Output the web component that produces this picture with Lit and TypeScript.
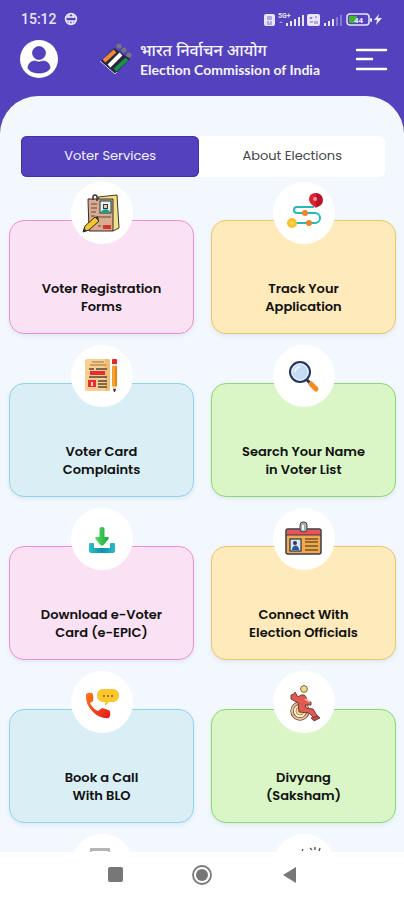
import { LitElement, html, css, svg, TemplateResult } from "lit";
import { customElement, property, state } from "lit/decorators.js";
import { classMap } from "lit/directives/class-map.js";

type Tone = "pink" | "amber" | "blue" | "green";

interface Service {
  lines: string[];
  tone: Tone;
  icon: TemplateResult;
}

const formsIcon = svg`
  <path d="M27 15l19-2 2 33-6 3z" fill="#f3e08a" stroke="#3b3a2c"/>
  <path d="M17 17h25v32H18z" fill="#d9ab90" stroke="#3a2b26"/>
  <path d="M22 18v-3a2 2 0 0 1 4 0v4" fill="none" stroke="#333" stroke-width="1.5"/>
  <rect x="29" y="19" width="11" height="12" fill="#e4f6f3" stroke="#26343a"/>
  <path d="M32 22h5v5h-5z" fill="#33383c"/><path d="M33 23h3v3h-3z" fill="#f1c7a4"/>
  <path d="M30 31c0-5 9-5 9 0z" fill="#17a384"/>
  <path d="M20 22h6M20 26h6M20 30h5M27 35h13M20 34h4M27 44h3" stroke="#6b463b" stroke-width="1.2"/>
  <rect x="32" y="43" width="8" height="4" fill="#d1372d"/>
  <path d="M12 50l2-6 10-9 4 4-10 9z" fill="#f3c52f" stroke="#2b2a22"/>
  <path d="M24 35l3-1 1 5z" fill="#333"/><path d="M12 50l1-4 3 3z" fill="#333"/>`;

const trackIcon = svg`
  <path d="M41 25H24a3 3 0 0 0 0 6h18a5 5 0 0 1 0 10H19" fill="none" stroke="#27b8b8" stroke-width="2"/>
  <path d="M43 26c-2-2-7-4-7-9a6 6 0 0 1 12 0c0 5-3 7-5 9z" fill="#df2033"/>
  <path d="M43 11a6 6 0 0 1 0 14z" fill="#b91327"/>
  <circle cx="42" cy="17" r="2" fill="#f59aa0"/>
  <circle cx="32" cy="31" r="3" fill="#f0822a"/><circle cx="36" cy="41" r="3" fill="#f0822a"/>
  <circle cx="19" cy="41" r="5" fill="#fbc02d"/><circle cx="19" cy="41" r="2" fill="#fbd257"/>`;

const complaintIcon = svg`
  <rect x="14" y="14" width="25" height="32" rx="2" fill="#f9cf8f"/>
  <path d="M34 14h3a2 2 0 0 1 2 2v28a2 2 0 0 1-2 2h-3z" fill="#f0bd78"/>
  <path d="M21 17h12M19 20h16" stroke="#b29161" stroke-width="1.3"/>
  <path d="M18 24h5M25 24h11M18 32h18M27 36h9M27 39h9M27 42h9" stroke="#544739" stroke-width="1.4"/>
  <rect x="19" y="26" width="15" height="4" fill="#ee2a35"/>
  <rect x="17" y="35" width="8" height="7" fill="#ee2a35"/>
  <path d="M20 37h2v4h-2z" fill="#fbd3c4"/>
  <rect x="41" y="14" width="5" height="6" rx="1" fill="#e8242f"/>
  <rect x="41" y="19" width="5" height="2" fill="#e3e3e3"/>
  <rect x="41" y="21" width="5" height="20" fill="#f5a12b"/><rect x="44" y="21" width="2" height="20" fill="#e28a19"/>
  <path d="M41 41h5l-2 5h-1z" fill="#f0cfa0"/><path d="M42 44h3l-1 3h-1z" fill="#3a3435"/>`;

const searchIcon = svg`
  <path d="M34 35l4 4" stroke="#24305c" stroke-width="3"/>
  <path d="M38 39l5 5" stroke="#f58b1f" stroke-width="5" stroke-linecap="round"/>
  <circle cx="27" cy="27" r="10" fill="#c3dcf4" stroke="#27315e" stroke-width="2"/>
  <circle cx="27" cy="27" r="8" fill="none" stroke="#e8f3fc"/>
  <path d="M22 27a5 5 0 0 1 5-5" fill="none" stroke="#eef7ff" stroke-width="2"/>`;

const downloadIcon = svg`
  <defs>
    <linearGradient id="tray" x1="0" x2="1"><stop stop-color="#28c3c9"/><stop offset=".5" stop-color="#0d8fae"/><stop offset="1" stop-color="#27bccc"/></linearGradient>
    <linearGradient id="arrow" x1="0" x2="1"><stop stop-color="#5bdc5a"/><stop offset="1" stop-color="#18a546"/></linearGradient>
  </defs>
  <path d="M19 35h3q1 0 1 1v4h16v-4q0-1 1-1h3q1 0 1 1v7q0 2-2 2H20q-2 0-2-2v-7q0-1 1-1z" fill="url(#tray)"/>
  <path d="M31 19q2.500 0 2.500 2v8h3q2 0 1 2l-5 6q-1.500 1.500-3 0l-5-6q-1-2 1-2h3v-8q0-2 2.500-2z" fill="url(#arrow)"/>`;

const officialsIcon = svg`
  <rect x="13" y="21" width="35" height="25" rx="2" fill="#f0aa4c" stroke="#393a4b" stroke-width="1.5"/>
  <path d="M14 23q0-1 1-1h31q1 0 1 1v4H14z" fill="#e9515b"/>
  <path d="M13 27h35" stroke="#393a4b"/>
  <rect x="27" y="14" width="7" height="10" rx="3" fill="#a7adb5" stroke="#3f434f"/>
  <path d="M30 17v5" stroke="#f4f4f4" stroke-width="2"/>
  <rect x="17" y="31" width="11" height="12" fill="#d8e9f8" stroke="#2c3245" stroke-width="1.2"/>
  <circle cx="22" cy="35" r="2" fill="#343b50"/><path d="M19 42c0-6 7-6 7 0z" fill="#2a56a0"/>
  <path d="M32 31h13M32 34h13M32 38h13M32 42h13" stroke="#765329" stroke-width="1.3"/>`;

const callIcon = svg`
  <defs><linearGradient id="phone" x1="0" y1="0" x2="1" y2="1"><stop stop-color="#ff7a1c"/><stop offset="1" stop-color="#e2181c"/></linearGradient></defs>
  <path d="M15 23q3-2 6-1 2 2 1 8l-3 2q2 5 8 8l4-3q5 1 8 3 1 4-1 7-9 1-16-6-8-8-7-18z" fill="url(#phone)"/>
  <path d="M33 18h9a6 6 0 0 1 6 6v1a6 6 0 0 1-6 6h-4l-4 4v-4h-2a6 6 0 0 1-6-6v-1a6 6 0 0 1 7-6z" fill="#fcc62c"/>
  <circle cx="33" cy="25" r="1" fill="#855d13"/><circle cx="37" cy="25" r="1" fill="#855d13"/><circle cx="41" cy="25" r="1" fill="#855d13"/>`;

const wheelchairIcon = svg`
  <circle cx="27" cy="40" r="8" fill="#fbf0d0" stroke="#6a493c" stroke-width="3.4"/>
  <circle cx="27" cy="40" r="8" fill="none" stroke="#f0c29a" stroke-width="1.8"/>
  <circle cx="27" cy="40" r="4" fill="#f3dc86" stroke="#99714e" stroke-width=".7"/>
  <circle cx="31" cy="18" r="3.4" fill="#f2da8b" stroke="#77694a"/>
  <path d="M18 24l3-1 1-2 3 5 3-2q4-1 5 2l1 4 4 1 0 3-6 0 1 3 7 1 5 8-3 2-6-6-10-1-1-9-7-4z" fill="#e15b52" stroke="#683633" stroke-width=".9"/>
  <path d="M32 28l5 3" stroke="#f3b58b" stroke-width="2"/>
  <path d="M38 47l7-2 2 2-6 3z" fill="#c84843" stroke="#683633" stroke-width=".8"/>`;

const documentIcon = svg`<rect x="19" y="14" width="20" height="30" rx="1" fill="#b5b5b5"/><rect x="21" y="17" width="16" height="25" fill="#fff"/>`;
const sparkIcon = svg`<path d="M37 14l2 2M42 13v3M47 14l-1 3M29 17l1-2" stroke="#555" stroke-width="1.4"/>`;

const SERVICES: Service[] = [
  { lines: ["Voter Registration", "Forms"], tone: "pink", icon: formsIcon },
  { lines: ["Track Your", "Application"], tone: "amber", icon: trackIcon },
  { lines: ["Voter Card", "Complaints"], tone: "blue", icon: complaintIcon },
  { lines: ["Search Your Name", "in Voter List"], tone: "green", icon: searchIcon },
  { lines: ["Download e-Voter", "Card (e-EPIC)"], tone: "pink", icon: downloadIcon },
  { lines: ["Connect With", "Election Officials"], tone: "amber", icon: officialsIcon },
  { lines: ["Book a Call", "With BLO"], tone: "blue", icon: callIcon },
  { lines: ["Divyang", "(Saksham)"], tone: "green", icon: wheelchairIcon },
  { lines: [], tone: "pink", icon: documentIcon },
  { lines: [], tone: "amber", icon: sparkIcon },
];

@customElement("status-bar")
class StatusBar extends LitElement {
  static styles = css`
    :host { display: flex; align-items: center; height: 38px; padding: 0 21px; color: #e9e4ff; font: 500 14px/20px Roboto, sans-serif; }
    .globe { margin-left: 7px; }
    .signals { margin-left: auto; }
    .tiny { font: 700 7px Roboto, sans-serif; }
    .level { font: 700 8px Roboto, sans-serif; }
  `;
  render() {
    return html`
      <span>15:12</span>
      <svg class="globe" width="14" height="14" viewBox="0 0 14 14" fill="none" stroke="currentColor" stroke-width="1.6" aria-hidden="true">
        <circle cx="7" cy="7" r="5.4" /><path d="M2 5h10M2 9h10M5 2v4M9 2v4M5 9l1 3M9 9l-1 3" />
      </svg>
      <svg class="signals" width="119" height="16" viewBox="0 0 119 16" fill="currentColor" aria-hidden="true">
        <rect x="0" y="3" width="11" height="12" rx="2" />
        <path d="M3 6h5M3 8h5M3 11h2M6 11h2M3 13h5" stroke="#7668c8" />
        <text class="tiny" x="14" y="7">5G+</text>
        <path d="M17 10l-2 2h4z" opacity=".5" />
        <path d="M22 12h2v3h-2zM26 10h2v5h-2zM30 8h2v7h-2zM34 6h2v9h-2zM38 4h2v11h-2z" />
        <rect x="43" y="3" width="13" height="12" rx="2" />
        <path d="M46 6l1 2 1-2M51 6h2M46 11h3M51 10v3M53 10v3" stroke="#7668c8" fill="none" />
        <path d="M60 12h2v3h-2zM64 10h2v5h-2zM68 8h2v7h-2z" />
        <path d="M72 6h2v9h-2zM76 4h2v11h-2z" opacity=".35" />
        <rect x="83" y="3" width="22" height="11" rx="3" fill="none" stroke="currentColor" stroke-width="1.5" />
        <rect x="85" y="5" width="8" height="7" rx="1" fill="#43b52d" />
        <text class="level" x="90" y="12">44</text>
        <rect x="106" y="7" width="2" height="4" rx="1" />
        <path d="M115 3l-5 6h3l-1 5 6-7h-4z" />
      </svg>`;
  }
}

@customElement("service-card")
class ServiceCard extends LitElement {
  @property({ attribute: false }) service!: Service;

  static styles = css`
    :host { display: block; }
    .card {
      display: flex; flex-direction: column; align-items: center; gap: 36px;
      width: 100%; height: 114px; padding: 0 4px; margin: 0;
      border: 1px solid; border-radius: 15px;
      box-shadow: 0 2px 4px #5070901f;
      color: #111; font: 600 13px/18px Poppins, Inter, sans-serif; text-align: center; cursor: pointer;
    }
    .pink { background: #fae2f4; border-color: #f08fd5; }
    .amber { background: #feeaba; border-color: #efc564; }
    .blue { background: #daeef5; border-color: #8ed5f0; }
    .green { background: #daf6c6; border-color: #88db6c; }
    .disc { flex: none; width: 62px; height: 62px; margin-top: -39px; border-radius: 50%; background: #fff; }
    .line { display: block; white-space: nowrap; }
  `;
  render() {
    const { lines, tone, icon } = this.service;
    return html`<button class=${classMap({ card: true, [tone]: true })}>
      <svg class="disc" viewBox="0 0 62 62" aria-hidden="true">${icon}</svg>
      <span>${lines.map((line) => html`<span class="line">${line}</span>`)}</span>
    </button>`;
  }
}

@customElement("app-root")
class AppRoot extends LitElement {
  @state() private tab = 0;

  static styles = css`
    :host {
      display: flex; flex-direction: column; height: 100vh; overflow: hidden;
      background: #5341bd; font-family: Poppins, Inter, sans-serif;
    }
    * { box-sizing: border-box; }
    button { border: 0; background: none; padding: 0; cursor: pointer; }
    svg { display: block; }
    .bar { display: flex; align-items: center; height: 58px; padding: 0 16px 16px 20px; }
    .brand { display: flex; align-items: center; gap: 8px; margin: 0 35px 0 auto; color: #f6f4ff; }
    .hindi { display: block; padding-top: 4px; font: 500 16px/18px "Noto Sans Devanagari", "Noto Sans", sans-serif; }
    .english { display: block; font: 700 14px/16px Lato, sans-serif; }
    .sheet {
      flex: 1; min-height: 0; overflow-y: auto; scrollbar-width: none;
      padding: 40px 8px 0 9px; border-radius: 38px 38px 0 0; background: #f3f8fe;
    }
    .tabs { display: grid; grid-template-columns: 49fr 51fr; margin: 0 11px 0 12px; border-radius: 6px; background: #fff; }
    .tab { height: 41px; padding-bottom: 2px; border-radius: 6px; color: #444; font: 400 13px/20px Poppins, Inter, sans-serif; }
    .active { background: #5341bd; color: #f4f1ff; box-shadow: inset 0 0 0 1px #4630ae; }
    .grid { display: grid; grid-template-columns: 1fr 1fr; gap: 49px 17px; margin-top: 43px; }
    .nav { display: flex; justify-content: center; align-items: center; gap: 65px; height: 48px; padding-bottom: 2px; background: #fff; }
  `;

  render() {
    return html`
      <status-bar></status-bar>
      <header class="bar">
        <button aria-label="Profile">
          <svg width="38" height="38" viewBox="0 0 38 38">
            <circle cx="19" cy="19" r="19" fill="#fff" />
            <circle cx="19" cy="13" r="6.5" fill="#5341bd" stroke="#3020a0" stroke-width=".6" />
            <path d="M8 28c0-4 3-7 7-7q4 2 8 0c4 0 7 3 7 7-1 3-6 5-11 5S9 31 8 28z" fill="#5341bd" stroke="#3020a0" stroke-width=".6" />
          </svg>
        </button>
        <div class="brand">
          <svg width="32" height="32" viewBox="0 0 32 32" aria-hidden="true">
            <circle cx="19" cy="3" r="2.6" fill="#77747f" /><circle cx="24" cy="7" r="2.6" fill="#77747f" /><circle cx="29" cy="12" r="2.6" fill="#77747f" />
            <path d="M1 18L14 5l16 11-15 15z" fill="#2c2740" />
            <path d="M4 18L15 8" stroke="#f08a35" stroke-width="4" />
            <path d="M9 23L21 11" stroke="#fff" stroke-width="4" />
            <path d="M15 27L27 16" stroke="#179348" stroke-width="4" />
            <path d="M0 18l15 13 2-2" fill="none" stroke="#c9c0f0" />
          </svg>
          <div>
            <span class="hindi" lang="hi">भारत निर्वाचन आयोग</span>
            <span class="english">Election Commission of India</span>
          </div>
        </div>
        <button aria-label="Menu">
          <svg width="33" height="24" viewBox="0 0 33 24" stroke="#fff" stroke-width="2.5" stroke-linecap="round">
            <path d="M2 3h29M2 12h15M2 22h29" />
          </svg>
        </button>
      </header>
      <main class="sheet">
        <div class="tabs" role="tablist">
          ${["Voter Services", "About Elections"].map(
            (label, i) => html`<button
              role="tab"
              aria-selected=${this.tab === i ? "true" : "false"}
              class=${classMap({ tab: true, active: this.tab === i })}
              @click=${() => (this.tab = i)}
            >${label}</button>`
          )}
        </div>
        <div class="grid">
          ${SERVICES.map((service) => html`<service-card .service=${service}></service-card>`)}
        </div>
      </main>
      <nav class="nav">
        <button aria-label="Recent apps">
          <svg width="22" height="22" viewBox="0 0 22 22"><rect x="4" y="3" width="15" height="15" rx="2" fill="#777" /></svg>
        </button>
        <button aria-label="Home">
          <svg width="22" height="22" viewBox="0 0 22 22"><circle cx="11" cy="11" r="9" fill="none" stroke="#777" stroke-width="1.8" /><circle cx="11" cy="11" r="6" fill="#777" /></svg>
        </button>
        <button aria-label="Back">
          <svg width="22" height="22" viewBox="0 0 22 22"><path d="M18 3v16L5 11z" fill="#777" /></svg>
        </button>
      </nav>`;
  }
}
